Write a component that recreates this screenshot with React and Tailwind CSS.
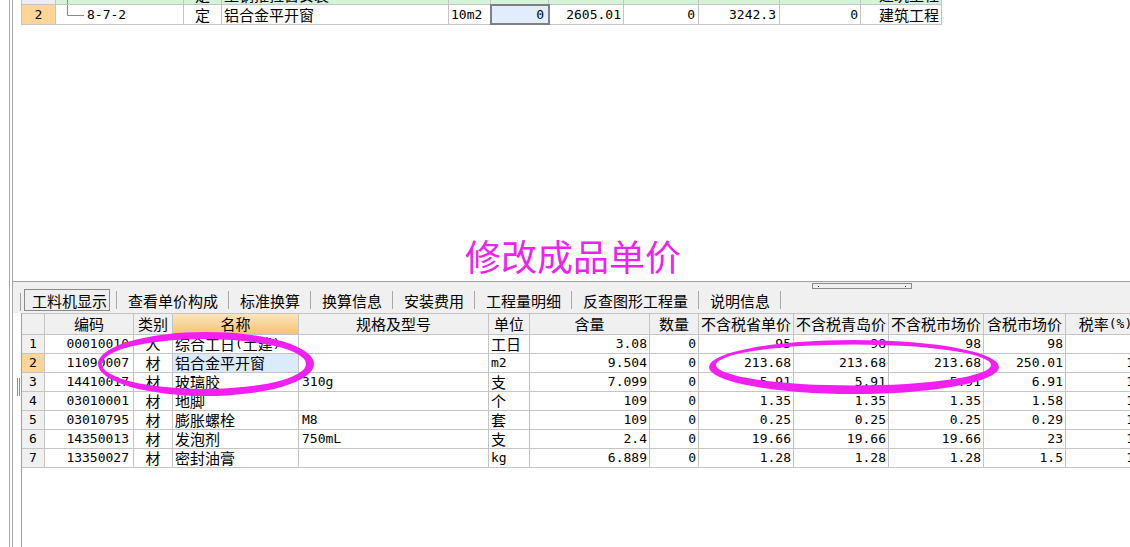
import clsx from 'clsx'

const LINE = 'border-[#c4c4c4]'

// ascii runs in a mono face, the rest in the CJK face
function Txt({ s }) {
  if (!s) return null
  const parts = s.split(/([\x20-\x7e]+)/).filter(Boolean)
  return parts.map((p, i) =>
    /^[\x20-\x7e]+$/.test(p) ? (
      <span key={i} className="font-['DejaVu_Sans_Mono',monospace] text-[13px]">
        {p}
      </span>
    ) : (
      <span key={i}>{p}</span>
    )
  )
}

function Cell({ w, a, className, children }) {
  return (
    <div
      className={clsx(
        'flex items-center shrink-0 border-r overflow-hidden whitespace-nowrap',
        LINE,
        w,
        a,
        className
      )}
    >
      {children}
    </div>
  )
}

const topCols = [
  ['w-[34px]', 'justify-center'],
  ['w-[128px]', 'justify-start pl-[10px]'],
  ['w-[38px]', 'justify-center'],
  ['w-[227px]', 'justify-start pl-[2px]'],
  ['w-[42px]', 'justify-start pl-[2px]'],
  ['w-[58px]', 'justify-end pr-[4px]'],
  ['w-[75px]', 'justify-end pr-[2px]'],
  ['w-[75px]', 'justify-end pr-[3px]'],
  ['w-[81px]', 'justify-end pr-[3px]'],
  ['w-[81px]', 'justify-end pr-[2px]'],
  ['w-[81px]', 'justify-end pr-[2px]'],
]

const topRows = [
  ['1', '18-1-101', '定', '塑钢推拉窗安装', '10m2', '1', '2769.52', '1', '2200.00', '1', '建筑工程'],
  ['2', '8-7-2', '定', '铝合金平开窗', '10m2', '0', '2605.01', '0', '3242.3', '0', '建筑工程'],
]

function Tree({ last }) {
  return (
    <svg width="20" height="20" className="shrink-0 mr-[1px]">
      <path d={last ? 'M1.5 0V10.5H18' : 'M1.5 0V20M1.5 10.5H18'} stroke="#8a8a8a" fill="none" />
    </svg>
  )
}

function TopGrid() {
  return (
    <div className={clsx('-mt-[15px] border-l w-fit', LINE)}>
      {topRows.map((r, ri) => (
        <div key={ri} className={clsx('flex h-[20px] leading-[19px] border-b', LINE)}>
          {r.map((v, ci) => {
            const [w, a] = topCols[ci]
            const sel = ri === 1 && ci === 5
            let bg = ri === 0 ? 'bg-[#d4f4d9]' : 'bg-white'
            if (ci === 0) bg = ri === 1 ? 'bg-[#fdd597]' : 'bg-[#eeeeee]'
            if (sel) bg = 'bg-[#e1edfc] outline-2 outline-[#808080] -outline-offset-1 relative'
            return (
              <Cell key={ci} w={w} a={a} className={bg}>
                {ci === 1 && <Tree last={ri === 1} />}
                <Txt s={v} />
              </Cell>
            )
          })}
        </div>
      ))}
    </div>
  )
}

const cols = [
  ['w-[23px]', 'justify-center', ''],
  ['w-[89px]', 'justify-end pr-[4px]', '编码'],
  ['w-[39px]', 'justify-center', '类别'],
  ['w-[126px]', 'justify-start pl-[2px]', '名称'],
  ['w-[190px]', 'justify-start pl-[3px]', '规格及型号'],
  ['w-[41px]', 'justify-start pl-[2px]', '单位'],
  ['w-[120px]', 'justify-end pr-[2px]', '含量'],
  ['w-[49px]', 'justify-end pr-[2px]', '数量'],
  ['w-[95px]', 'justify-end pr-[2px]', '不含税省单价'],
  ['w-[95px]', 'justify-end pr-[2px]', '不含税青岛价'],
  ['w-[95px]', 'justify-end pr-[2px]', '不含税市场价'],
  ['w-[82px]', 'justify-end pr-[2px]', '含税市场价'],
  ['w-[80px]', 'justify-end pr-[3px]', '税率(%)'],
]

const rows = [
  ['1', '00010010', '人', '综合工日(土建)', '', '工日', '3.08', '0', '95', '98', '98', '98', ''],
  ['2', '11090007', '材', '铝合金平开窗', '', 'm2', '9.504', '0', '213.68', '213.68', '213.68', '250.01', '17'],
  ['3', '14410017', '材', '玻璃胶', '310g', '支', '7.099', '0', '5.91', '5.91', '5.91', '6.91', '17'],
  ['4', '03010001', '材', '地脚', '', '个', '109', '0', '1.35', '1.35', '1.35', '1.58', '17'],
  ['5', '03010795', '材', '膨胀螺栓', 'M8', '套', '109', '0', '0.25', '0.25', '0.25', '0.29', '17'],
  ['6', '14350013', '材', '发泡剂', '750mL', '支', '2.4', '0', '19.66', '19.66', '19.66', '23', '17'],
  ['7', '13350027', '材', '密封油膏', '', 'kg', '6.889', '0', '1.28', '1.28', '1.28', '1.5', '17'],
]

function LowerGrid() {
  return (
    <div className="w-fit">
      <div className={clsx('flex h-[22px] leading-[20px] border-y bg-[#f0f0f0]', LINE)}>
        {cols.map(([w, , h], ci) => (
          <Cell
            key={ci}
            w={w}
            a="justify-center"
            className={ci === 3 && 'bg-linear-to-b from-[#fce6ba] to-[#f4c276]'}
          >
            <Txt s={h} />
          </Cell>
        ))}
      </div>
      {rows.map((r, ri) => (
        <div key={ri} className={clsx('flex h-[19px] leading-[18px] border-b', LINE)}>
          {r.map((v, ci) => {
            const [w, a] = cols[ci]
            let bg = 'bg-white'
            if (ci === 0) bg = ri === 1 ? 'bg-[#fdd597]' : 'bg-[#f0f0f0]'
            if (ci === 3 && ri === 1) bg = 'bg-[#dcebfc]'
            return (
              <Cell key={ci} w={w} a={a} className={bg}>
                <Txt s={v} />
              </Cell>
            )
          })}
        </div>
      ))}
    </div>
  )
}

const tabs = ['查看单价构成', '标准换算', '换算信息', '安装费用', '工程量明细', '反查图形工程量', '说明信息']

function TabBar() {
  return (
    <div className="h-[31px] bg-[#f0f0f0] flex flex-col shrink-0">
      <div className="h-[7px] pl-[799px]">
        <div className="mt-[1px] w-[100px] h-[6px] border border-[#8c8c8c] flex items-center justify-between px-[5px]">
          <div className="w-px h-px bg-[#1a1a8c]" />
          <div className="w-px h-px bg-[#1a1a8c]" />
        </div>
      </div>
      <div className="h-[22px] flex">
        <div className="ml-[7px] w-px bg-[#a0a0a0] mt-[4px]" />
        <div className="ml-[3px] w-[86px] border border-[#8a8a8a] flex items-center pl-[7px] leading-none">
          工料机显示
        </div>
        <div className="ml-[6px] w-px bg-[#a8a8a8] my-[2px]" />
        {tabs.map((t) => (
          <div key={t} className="flex">
            <div className="pl-[11px] pr-[10px] flex items-center leading-none">{t}</div>
            <div className="w-px bg-[#a8a8a8] my-[2px]" />
          </div>
        ))}
      </div>
    </div>
  )
}

export default function App() {
  return (
    <div className="relative w-[1130px] h-[547px] overflow-hidden bg-white flex font-['Noto_Sans_CJK_SC',sans-serif] text-[15px] text-black">
      {/* left frame */}
      <div className="flex w-[13px] shrink-0">
        <div className="w-[9px]" />
        <div className="w-px bg-[#a8a8a8]" />
        <div className="w-[2px]" />
        <div className="w-px bg-[#a8a8a8]" />
      </div>

      <div className="flex-1 flex flex-col min-w-0">
        <div className="h-[281px] flex flex-col shrink-0">
          <div className="pl-[8px]">
            <TopGrid />
          </div>
          <div className="mt-[210px] pl-[452px] text-[36px] leading-[40px] text-[#ee22ee]">修改成品单价</div>
        </div>
        <div className="h-px bg-[#a0a0a0] shrink-0" />
        <TabBar />
        <div className="flex-1 flex">
          <div className="w-[8px] shrink-0">
            <div className="mt-[65px] ml-[4px] w-[3px] h-[18px] border-x border-[#909090]" />
          </div>
          <div className="flex-1 border-l border-[#a0a0a0] overflow-hidden">
            <LowerGrid />
          </div>
        </div>
      </div>

      {/* hand-drawn marks over the grid */}
      <svg className="absolute inset-0 pointer-events-none" width="1130" height="547">
        <path
          fillRule="evenodd"
          fill="#f021f0"
          d="M98 364a108 32 0 1 0 216 0a108 32 0 1 0 -216 0Z M102 364a102 25 0 1 0 204 0a102 25 0 1 0 -204 0Z"
        />
        <path
          fillRule="evenodd"
          fill="#f021f0"
          d="M709 367a145 27 0 1 0 290 0a145 27 0 1 0 -290 0Z M716 365a137.5 20.5 0 1 0 275 0a137.5 20.5 0 1 0 -275 0Z"
        />
      </svg>
    </div>
  )
}
